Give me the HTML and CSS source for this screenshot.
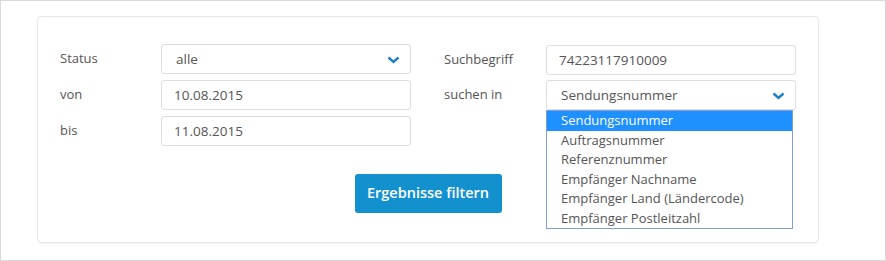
FILE: index.html
```html
<!DOCTYPE html>
<html lang="de">
<head>
    <meta charset="UTF-8">
    <title>Sendungen filtern</title>
    <link rel="stylesheet" href="styles.css">
</head>
<body>

<div class="frame">
    <!-- Filter panel -->
    <div class="panel">
        <div class="filter-grid">
            <div class="column">
                <div class="row">
                    <label class="label">Status</label>
                    <div class="field select">
                        <span>alle</span>
                        <svg class="chevron" viewBox="0 0 12 8"><path d="M1 1.5 L6 6 L11 1.5"/></svg>
                    </div>
                </div>
                <div class="row">
                    <label class="label">von</label>
                    <div class="field">10.08.2015</div>
                </div>
                <div class="row">
                    <label class="label">bis</label>
                    <div class="field">11.08.2015</div>
                </div>
            </div>

            <div class="column right">
                <div class="row">
                    <label class="label">Suchbegriff</label>
                    <div class="field">74223117910009</div>
                </div>
                <div class="row">
                    <label class="label">suchen in</label>
                    <div class="field select open">
                        <span>Sendungsnummer</span>
                        <svg class="chevron" viewBox="0 0 12 8"><path d="M1 1.5 L6 6 L11 1.5"/></svg>
                        <!-- opened option list -->
                        <ul class="options">
                            <li class="selected">Sendungsnummer</li>
                            <li>Auftragsnummer</li>
                            <li>Referenznummer</li>
                            <li>Empfänger Nachname</li>
                            <li>Empfänger Land (Ländercode)</li>
                            <li>Empfänger Postleitzahl</li>
                        </ul>
                    </div>
                </div>
            </div>
        </div>

        <div class="actions">
            <button class="btn">Ergebnisse filtern</button>
        </div>
    </div>
</div>

</body>
</html>
```

FILE: styles.css
```css
body {
    margin: 0;
    padding: 0;
    font-family: "Open Sans", "Noto Sans", sans-serif;
    font-size: 13px;
    color: #555;
    background: #fff;
}

.frame {
    border: 1px solid #d9d9d9;
    padding: 15px 0 0 36px;
    width: 848px;
    height: 244px;
}

/* Panel */
.panel {
    width: 780px;
    height: 225px;
    border: 1px solid #e6e6e6;
    border-radius: 4px;
    box-shadow: 0 1px 1px rgba(0, 0, 0, 0.04);
}

.filter-grid {
    display: flex;
    padding: 27px 0 0 22px;
}

.column {
    display: flex;
    flex-direction: column;
    gap: 6px;
}

.column.right {
    margin-left: 33px;
    padding-top: 1px;
    gap: 5px;
}

.row {
    display: flex;
    align-items: center;
}

.label {
    width: 101px;
    padding-bottom: 3px;
}

.right .label {
    width: 102px;
}

/* Inputs */
.field {
    position: relative;
    width: 250px;
    height: 30px;
    box-sizing: border-box;
    border: 1px solid #dedede;
    border-radius: 3px;
    padding: 0 12px;
    line-height: 28px;
    font-size: 13.5px;
    background: #fff;
}

.select span {
    padding-left: 2px;
}

.chevron {
    position: absolute;
    right: 10px;
    top: 11px;
    width: 13px;
    height: 8px;
    fill: none;
    stroke: #1b7fc4;
    stroke-width: 2.4;
}

/* Open dropdown */
.options {
    position: absolute;
    left: -1px;
    top: 29px;
    width: 245px;
    margin: 0;
    padding: 0;
    list-style: none;
    border: 1px solid #7e9ed6;
    background: #fff;
    z-index: 2;
}

.options li {
    height: 19.5px;
    line-height: 19px;
    padding-left: 14px;
    font-size: 13px;
}

.options li.selected {
    background-color: #1e90ff;
    color: #fff;
}

/* Button */
.actions {
    display: flex;
    justify-content: center;
    margin-top: 28px;
}

.btn {
    width: 147px;
    height: 39px;
    background-color: #1391cf;
    color: #fff;
    border: none;
    border-radius: 3px;
    font-family: "Open Sans", "Noto Sans", sans-serif;
    font-size: 14.5px;
    font-weight: 600;
    padding: 0 0 3px;
    cursor: pointer;
}
```
